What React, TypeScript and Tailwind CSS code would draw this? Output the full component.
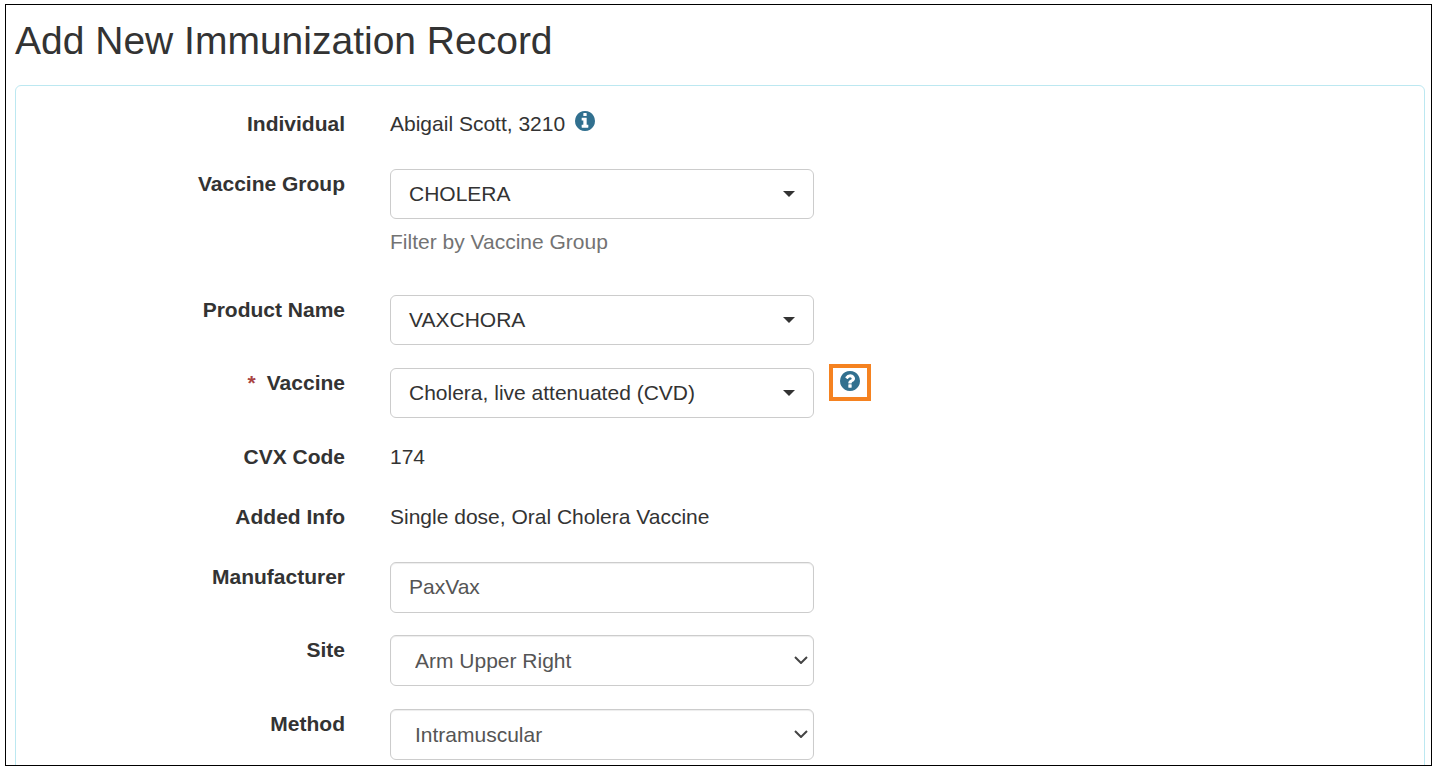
function InfoCircle({ className }: { className?: string }) {
  return (
    <svg viewBox="128 128 1536 1536" fill="currentColor" className={className}>
      <path d="M1152 1376v-160q0-14-9-23t-23-9h-96v-512q0-14-9-23t-23-9h-320q-14 0-23 9t-9 23v160q0 14 9 23t23 9h96v320h-96q-14 0-23 9t-9 23v160q0 14 9 23t23 9h448q14 0 23-9t9-23zm-128-896v-160q0-14-9-23t-23-9h-192q-14 0-23 9t-9 23v160q0 14 9 23t23 9h192q14 0 23-9t9-23zm640 416q0 209-103 385.5t-279.5 279.5-385.5 103-385.5-103-279.5-279.5-103-385.5 103-385.5 279.5-279.5 385.5-103 385.5 103 279.5 279.5 103 385.5z" />
    </svg>
  )
}

function QuestionCircle({ className }: { className?: string }) {
  return (
    <svg viewBox="128 128 1536 1536" fill="currentColor" className={className}>
      <path d="M1024 1376v-192q0-14-9-23t-23-9h-192q-14 0-23 9t-9 23v192q0 14 9 23t23 9h192q14 0 23-9t9-23zm256-672q0-88-55.5-163t-138.5-116-170-41q-243 0-371 213-15 24 8 42l132 100q7 6 19 6 16 0 25-12 53-68 86-92 34-24 86-24 48 0 85.5 26t37.5 59q0 38-20 61t-68 45q-63 28-115.5 86.5t-52.5 125.5v36q0 14 9 23t23 9h192q14 0 23-9t9-23q0-19 21.5-49.5t54.5-49.5q32-18 49-28.5t46-35 44.5-48 28-60.5 12.5-81zm384 192q0 209-103 385.5t-279.5 279.5-385.5 103-385.5-103-279.5-279.5-103-385.5 103-385.5 279.5-279.5 385.5-103 385.5 103 279.5 279.5 103 385.5z" />
    </svg>
  )
}

function Row({ label, required, className, children }: { label: string; required?: boolean; className?: string; children: React.ReactNode }) {
  return (
    <div className={`flex items-start ${className ?? ""}`}>
      <label className="w-[329px] shrink-0 text-right font-bold leading-[28px] pt-px">
        {required && <span className="text-[#a94442] mr-[11px]">*</span>}
        {label}
      </label>
      <div className="ml-[45px]">{children}</div>
    </div>
  )
}

// bootstrap-select style dropdown, caret drawn with borders
function Dropdown({ value }: { value: string }) {
  return (
    <div className="w-[424px] h-[50px] flex items-center justify-between border border-[#ccc] rounded-[6px] pl-[18px] pr-[18px] bg-white">
      <span>{value}</span>
      <span className="w-0 h-0 border-x-[6px] border-x-transparent border-t-[6px] border-t-[#333]" />
    </div>
  )
}

function NativeSelect({ value }: { value: string }) {
  return (
    <div className="relative w-[424px] h-[51px]">
      <select
        defaultValue={value}
        className="block w-full h-full border border-[#ccc] rounded-[6px] pl-[24px] pr-[30px] bg-white text-[#555] appearance-none shadow-[inset_0_1px_1px_rgba(0,0,0,0.075)]"
      >
        <option>{value}</option>
      </select>
      <svg viewBox="0 0 14 8" className="absolute right-[6px] top-[21px] w-[14px] h-[8px] pointer-events-none" fill="none" stroke="#444" strokeWidth="2">
        <path d="M1 1l6 6 6-6" />
      </svg>
    </div>
  )
}

export default function App() {
  return (
    <div className="w-[1436px] h-[771px] bg-white overflow-hidden pt-[4px] pl-[5px] font-['Liberation_Sans',Arial,sans-serif] text-[21px] text-[#333]">
      <div className="w-[1427px] h-[762px] border border-black overflow-hidden pl-[9px] pr-[6px]">
        <h1 className="text-[39px] leading-[44px] font-normal mt-[14px]">Add New Immunization Record</h1>
        <div className="mt-[22px] h-[800px] border border-[#bce8f1] rounded-[6px] bg-white">
          <Row label="Individual" className="mt-[23px]">
            <div className="flex items-center leading-[28px] pt-px">
              Abigail Scott, 3210
              <InfoCircle className="ml-[10px] -mt-[6px] text-[#31708f] w-[20px] h-[20px]" />
            </div>
          </Row>
          <Row label="Vaccine Group" className="mt-[31px]">
            <Dropdown value="CHOLERA" />
            <p className="mt-[9px] leading-[28px] text-[#737373]">Filter by Vaccine Group</p>
          </Row>
          <Row label="Product Name" className="mt-[39px]">
            <Dropdown value="VAXCHORA" />
          </Row>
          <Row label="Vaccine" required className="mt-[23px]">
            <div className="flex items-start">
              <Dropdown value="Cholera, live attenuated (CVD)" />
              <div className="ml-[15px] -mt-[4px] w-[42px] h-[37px] border-[4px] border-[#f58220] flex items-center justify-center">
                <QuestionCircle className="text-[#31708f] w-[20px] h-[20px] -mt-[3px]" />
              </div>
            </div>
          </Row>
          <Row label="CVX Code" className="mt-[24px]">
            <div className="leading-[28px] pt-px">174</div>
          </Row>
          <Row label="Added Info" className="mt-[31px]">
            <div className="leading-[28px] pt-px">Single dose, Oral Cholera Vaccine</div>
          </Row>
          <Row label="Manufacturer" className="mt-[31px]">
            <input
              readOnly
              value="PaxVax"
              className="block w-[424px] h-[51px] border border-[#ccc] rounded-[6px] px-[18px] pb-[2px] text-[#555] shadow-[inset_0_1px_1px_rgba(0,0,0,0.075)]"
            />
          </Row>
          <Row label="Site" className="mt-[22px]">
            <NativeSelect value="Arm Upper Right" />
          </Row>
          <Row label="Method" className="mt-[23px]">
            <NativeSelect value="Intramuscular" />
          </Row>
        </div>
      </div>
    </div>
  )
}
